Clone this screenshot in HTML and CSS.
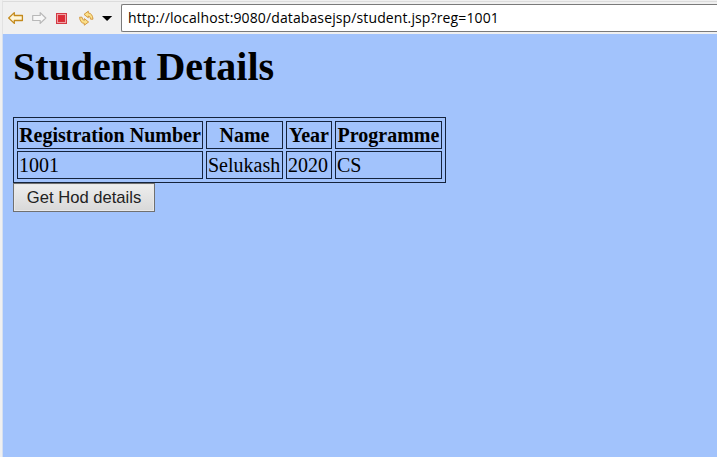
FILE: index.html
```html
<!DOCTYPE html>
<html lang="en">
<head>
<meta charset="utf-8">
<title>Student Details</title>
<link rel="stylesheet" href="styles.css">
</head>
<body>
<header class="toolbar">
  <svg class="tools" width="118" height="32" viewBox="0 0 118 32" aria-hidden="true">
    <path class="back" d="M5.7 16 L11.3 10.6 V13.5 H19.4 V18.5 H11.3 V21.4 Z"/>
    <path class="forward" d="M42.8 16 L37.2 10.6 V13.5 H29.7 V18.5 H37.2 V21.4 Z"/>
    <rect class="stop" x="53.5" y="11.5" width="10" height="10"/>
    <rect class="stop-core" x="55.5" y="13.5" width="6" height="6"/>
    <g class="refresh">
      <path d="M81 12.4 L85.3 9.2 V11 Q89.5 11.3 90 17.2 H87.6 Q87.4 14.2 85.3 14 V15.8 Z"/>
      <path d="M85.6 20 L81.3 23.2 V21.4 Q77 21 76.6 15.2 H79 Q79.3 18.2 81.3 18.4 V16.6 Z"/>
    </g>
    <path d="M99 14 H109.2 L104.1 19 Z"/>
  </svg>
  <div class="address">http://localhost:9080/databasejsp/student.jsp?reg=1001</div>
</header>
<main class="page">
  <h1>Student Details</h1>
  <table>
    <colgroup><col class="c-reg"><col class="c-name"><col class="c-year"><col class="c-prog"></colgroup>
    <tr><th>Registration Number</th><th>Name</th><th>Year</th><th>Programme</th></tr>
    <tr><td>1001</td><td>Selukash</td><td>2020</td><td>CS</td></tr>
  </table>
  <button type="button">Get Hod details</button>
</main>
</body>
</html>
```
FILE: styles.css
```css
* { box-sizing: border-box; }
body {
  margin: 0;
  height: 457px;
  overflow: hidden;
  display: flex;
  flex-direction: column;
  background: #f0f0f0;
  border-left: 2px solid #f0f0f0;
  font-family: "Liberation Serif", serif;
  color: #000;
}
.toolbar {
  height: 34px;
  flex: none;
  display: flex;
  border-top: 1px solid #f0f0f0;
  border-left: 1px solid #e2e2e2;
  box-shadow: inset 0 1px #dcdcdc;
}
.tools { flex: none; margin-top: 1px; }
.back { fill: #fff6d8; stroke: #c48a1c; stroke-width: 1.3; stroke-linejoin: round; }
.forward { fill: #f7f7f7; stroke: #b8b8b8; stroke-width: 1.2; stroke-linejoin: round; }
.stop { fill: #f0a0a4; stroke: #d23a44; }
.stop-core { fill: #dc2a34; stroke: #d8303a; }
.refresh { fill: #fbe08a; stroke: #d09236; stroke-width: .9; stroke-linejoin: round; }
.address {
  flex: 1;
  height: 28px;
  margin-top: 3px;
  padding-left: 6px;
  background: #fff;
  border: 1px solid #7a7a7a;
  border-right: 0;
  border-radius: 2px 0 0 2px;
  font: 14px/25px "Open Sans", sans-serif;
  letter-spacing: .12px;
  white-space: nowrap;
}
.page {
  flex: 1;
  background: #a2c3fc;
  border-left: 1px solid #d5dff0;
  padding: 10px 10px 0;
}
h1 { margin: 0 0 27px; font-size: 40px; line-height: 46px; }
table {
  table-layout: fixed;
  width: 433px;
  padding: 1px 0;
  border: 1px solid #14233c;
  border-collapse: separate;
  border-spacing: 3px 2px;
  font-size: 20px;
  line-height: 24px;
}
th, td { height: 28px; padding: 1px; border: 1px solid #14233c; white-space: nowrap; }
.c-reg { width: 186px; }
.c-name { width: 77px; }
.c-year { width: 46px; }
.c-prog { width: 107px; }
button {
  display: block;
  width: 142px;
  height: 29px;
  padding: 0;
  border: 1px solid #707070;
  border-radius: 0;
  background: linear-gradient(#eee, #d8d8d8);
  box-shadow: inset 0 0 0 1px #e8e8e8;
  color: #222;
  font: 16.6px "Liberation Sans", sans-serif;
}
```
